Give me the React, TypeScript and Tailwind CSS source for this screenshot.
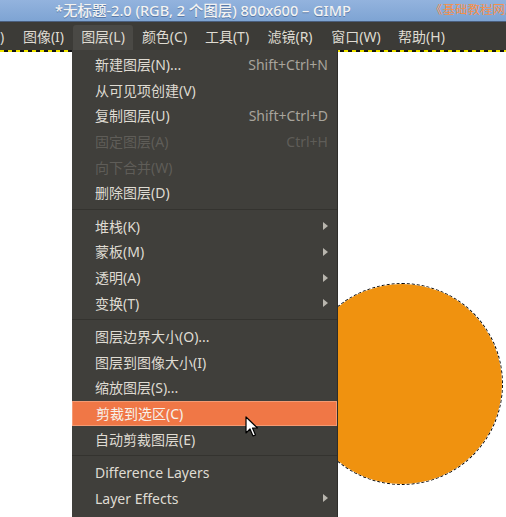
type Item =
  | { kind: "item"; label: string; shortcut?: string; disabled?: boolean; sub?: boolean; active?: boolean }
  | { kind: "sep" };

const items: Item[] = [
  { kind: "item", label: "新建图层(N)...", shortcut: "Shift+Ctrl+N" },
  { kind: "item", label: "从可见项创建(V)" },
  { kind: "item", label: "复制图层(U)", shortcut: "Shift+Ctrl+D" },
  { kind: "item", label: "固定图层(A)", shortcut: "Ctrl+H", disabled: true },
  { kind: "item", label: "向下合并(W)", disabled: true },
  { kind: "item", label: "删除图层(D)" },
  { kind: "sep" },
  { kind: "item", label: "堆栈(K)", sub: true },
  { kind: "item", label: "蒙板(M)", sub: true },
  { kind: "item", label: "透明(A)", sub: true },
  { kind: "item", label: "变换(T)", sub: true },
  { kind: "sep" },
  { kind: "item", label: "图层边界大小(O)..." },
  { kind: "item", label: "图层到图像大小(I)" },
  { kind: "item", label: "缩放图层(S)..." },
  { kind: "item", label: "剪裁到选区(C)", active: true },
  { kind: "item", label: "自动剪裁图层(E)" },
  { kind: "sep" },
  { kind: "item", label: "Difference Layers" },
  { kind: "item", label: "Layer Effects", sub: true },
  { kind: "item", label: "Liquid改变大小" },
];

const menus = [
  { label: ")", w: "w-[14px]", align: "text-left" },
  { label: "图像(I)", w: "w-[59px]", align: "text-center" },
  { label: "图层(L)", w: "w-[60px]", align: "text-center", open: true },
  { label: "颜色(C)", w: "w-[63px]", align: "text-center" },
  { label: "工具(T)", w: "w-[62px]", align: "text-center" },
  { label: "滤镜(R)", w: "w-[64px]", align: "text-center" },
  { label: "窗口(W)", w: "w-[68px]", align: "text-center" },
  { label: "帮助(H)", w: "w-[63px]", align: "text-center" },
];

function Arrow() {
  return (
    <svg width="5" height="8" viewBox="0 0 5 8" className="shrink-0">
      <path d="M0 0 L5 4 L0 8 Z" fill="#b9b6ae" />
    </svg>
  );
}

export default function App() {
  return (
    <div
      className="relative flex h-[517px] w-[506px] flex-col overflow-hidden bg-white text-[14px]"
      style={{ fontFamily: '"Noto Sans", "Noto Sans CJK SC", sans-serif' }}
    >
      {/* title bar */}
      <div className="flex h-[21px] shrink-0 items-center justify-between bg-[linear-gradient(#93b3de,#7ea4d3)] pl-[55px]">
        <span className="text-[14.5px] leading-none font-medium text-[#f4f4f2] [text-shadow:0_1px_0_#5a7aa8]">
          *无标题-2.0 (RGB, 2 个图层) 800x600 – GIMP
        </span>
        <span className="-mr-[10px] w-[86px] overflow-hidden whitespace-nowrap text-[12.5px] leading-none text-[#f6904a]">
          《基础教程网》
        </span>
      </div>
      <div className="h-px shrink-0 bg-[#4b5f7d]" />

      {/* menu bar */}
      <div className="flex h-[28px] shrink-0 items-end bg-[#3c3b37] text-[#dfdbd2]">
        {menus.map((m) => (
          <div
            key={m.label}
            className={`${m.w} ${m.align} flex h-[25px] shrink-0 items-center justify-center whitespace-nowrap rounded-t-[3px] ${
              m.open ? "bg-[#4a4945]" : ""
            } ${m.label === ")" ? "justify-start pb-[3px]" : "pb-[3px]"}`}
          >
            {m.label}
          </div>
        ))}
      </div>

      {/* canvas */}
      <div className="relative flex-1 bg-white">
        <div className="h-[2px] bg-[repeating-linear-gradient(90deg,#f2e600_0_4px,#111_4px_8px)]" />

        <div className="absolute left-[301px] top-[233px] h-[202px] w-[202px] rounded-full border-[1.5px] border-dashed border-black bg-[#f0920f] bg-clip-padding" />

        {/* dropdown */}
        <div className="absolute left-[72px] top-0 w-[265px] bg-[#403f3b] pt-[2px] shadow-[1px_0_0_#2e2d2a]">
          {items.map((it, i) =>
            it.kind === "sep" ? (
              <div key={i} className="flex h-[8px] items-center">
                <div className="h-px w-full bg-[#34332f]" />
              </div>
            ) : (
              <div
                key={i}
                className={`flex h-[25.6px] items-center justify-between whitespace-nowrap pl-[23px] pr-[9px] ${
                  it.active ? "border border-[#f49a73] bg-[#f07746] text-[#f6f2ec]" : ""
                } ${it.disabled ? "text-[#5f5d58]" : it.active ? "" : "text-[#dfdbd2]"}`}
              >
                <span>{it.label}</span>
                {it.shortcut && (
                  <span className={it.disabled ? "text-[#5f5d58]" : "text-[#a8a49c]"}>{it.shortcut}</span>
                )}
                {it.sub && <Arrow />}
              </div>
            )
          )}
        </div>

        {/* cursor */}
        <svg width="14" height="22" viewBox="0 0 14 22" className="absolute left-[245px] top-[366px]">
          <path d="M1 1 L1 17 L5 13 L8 20 L10.5 19 L7.5 12 L12.5 12 Z" fill="#fff" stroke="#000" strokeWidth="1.2" strokeLinejoin="round" />
        </svg>
      </div>
    </div>
  );
}
